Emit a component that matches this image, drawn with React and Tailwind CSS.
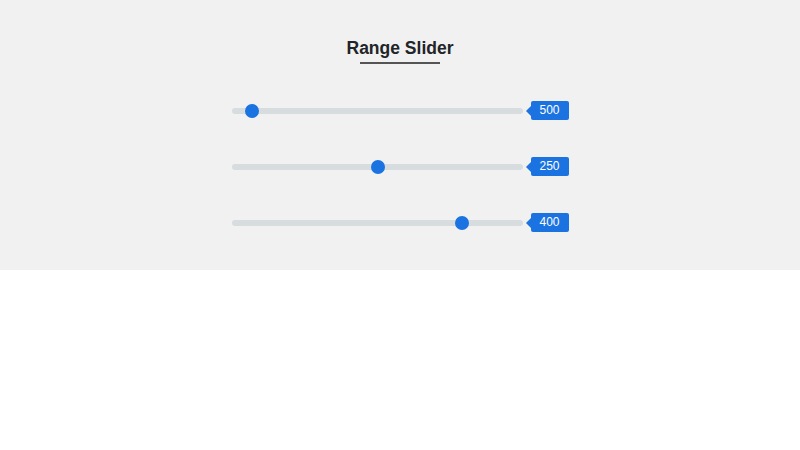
const sliders = [
  { value: 500, pos: 251 },
  { value: 250, pos: 377 },
  { value: 400, pos: 461 },
]

function Slider({ value, pos }) {
  return (
    <div className="flex items-center h-[19px]">
      <div className="relative w-[291px] h-[6px] rounded-full bg-[#d7dcdf]">
        <div
          className="absolute top-1/2 w-[14px] h-[14px] -mt-[7px] -ml-[7px] rounded-full bg-[#1a73e0]"
          style={{ left: pos - 231 }}
        />
      </div>
      <div className="relative ml-[8px] w-[38px] h-[19px] rounded-[2px] bg-[#1a73e0] text-white text-[12px] leading-[19px] text-center">
        <span className="absolute left-[-5px] top-1/2 -mt-[5px] w-0 h-0 border-y-[5px] border-y-transparent border-r-[5px] border-r-[#1a73e0]" />
        {value}
      </div>
    </div>
  )
}

export default function App() {
  return (
    <div className="font-['Liberation_Sans',Arial,sans-serif]">
      <div className="h-[270px] bg-[#f1f1f1] pt-[38px] flex flex-col items-center">
        <h1 className="text-[17.5px] leading-[21px] font-bold text-[#222428]">Range Slider</h1>
        <div className="mt-[3px] w-[80px] h-[2px] bg-[#555]" />
        <div className="mt-[37px] flex flex-col gap-[37px]">
          {sliders.map((s) => (
            <Slider key={s.value} {...s} />
          ))}
        </div>
      </div>
    </div>
  )
}
